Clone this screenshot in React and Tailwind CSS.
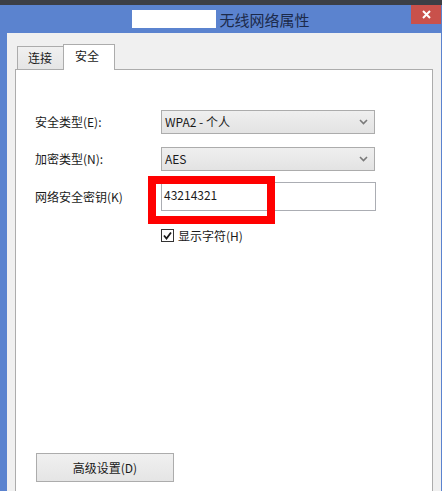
import React from 'react';

const font = "font-['Noto_Sans_CJK_SC',sans-serif]";

const Chevron = () => (
  <svg width="9" height="6" viewBox="0 0 9 6" className="shrink-0">
    <polyline points="1,1 4.5,4.5 8,1" fill="none" stroke="#7a7a7a" strokeWidth="1.6" />
  </svg>
);

const Select = ({ value }) => (
  <div className="w-[214px] h-[24px] border border-[#acacac] bg-gradient-to-b from-[#efefef] to-[#e3e3e3] flex items-center justify-between pl-[3px] pr-[6px]">
    <span className="text-[12px] leading-none text-[#1a1a1a]">{value}</span>
    <Chevron />
  </div>
);

const Row = ({ label, children, className = '' }) => (
  <div className={`flex items-center ${className}`}>
    <span className="w-[126px] text-[12px] leading-none text-[#1a1a1a]">{label}</span>
    {children}
  </div>
);

const App = () => {
  return (
    <div className={`w-[442px] h-[491px] overflow-hidden bg-[#3c3f46] ${font}`}>
      {/* strip of the desktop behind the window */}
      <div className="h-[5px]" />

      {/* window frame */}
      <div className="h-[486px] bg-[#5b83cf] pl-[7px] pr-px flex flex-col">
        {/* title bar */}
        <div className="relative h-[28px] shrink-0 flex items-center justify-center gap-[3px] -ml-[7px] -mr-px">
          <div className="w-[84px] h-[18px] bg-white" />
          <span className="text-[15px] leading-none text-[#1c2a4a]">无线网络属性</span>
          <div className="absolute top-0 right-px w-[30px] h-[19px] bg-[#c9514b] flex items-center justify-center">
            <svg width="9" height="9" viewBox="0 0 9 9">
              <path d="M1 1 L8 8 M8 1 L1 8" stroke="#fff" strokeWidth="2" />
            </svg>
          </div>
        </div>

        {/* client area */}
        <div className="flex-1 bg-[#f0f0f0] px-[8px] pt-[11px] flex flex-col">
          {/* tabs */}
          <div className="flex items-end pl-[2px]">
            <div className="w-[46px] h-[23px] border-l border-t border-[#acacac] bg-gradient-to-b from-[#f0f0f0] to-[#e5e5e5] flex items-center justify-center">
              <span className="text-[12px] leading-none text-[#1a1a1a] -ml-[1px]">连接</span>
            </div>
            <div className="relative z-10 w-[52px] h-[26px] -mb-px border-l border-t border-r border-[#acacac] bg-white flex items-start justify-center pt-[5px]">
              <span className="text-[12px] leading-none text-[#1a1a1a] -ml-[4px]">安全</span>
            </div>
          </div>

          {/* tab page */}
          <div className="relative flex-1 border border-b-0 border-[#acacac] bg-white pl-[19px] pt-[40px] flex flex-col">
            <Row label="安全类型(E):">
              <Select value="WPA2 - 个人" />
            </Row>
            <Row label="加密类型(N):" className="mt-[13px]">
              <Select value="AES" />
            </Row>
            <Row label="网络安全密钥(K)" className="mt-[11px]">
              <div className="w-[215px] h-[29px] border border-[#abadb3] bg-white flex items-center pl-[2px] pb-[3px]">
                <span className="text-[12px] leading-none text-[#1a1a1a]">43214321</span>
              </div>
            </Row>

            <div className="flex items-center mt-[18px] pl-[126px]">
              <div className="w-[13px] h-[13px] border border-[#333] bg-white flex items-center justify-center">
                <svg width="9" height="9" viewBox="0 0 9 9">
                  <path d="M1 4.5 L3.5 7.5 L8 1.5" fill="none" stroke="#1a1a1a" strokeWidth="1.8" />
                </svg>
              </div>
              <span className="ml-[4px] text-[12px] leading-none text-[#1a1a1a]">显示字符(H)</span>
            </div>

            <button className="mt-[211px] ml-px w-[138px] h-[29px] border border-[#acacac] bg-gradient-to-b from-[#f0f0f0] to-[#e5e5e5] flex items-center justify-center">
              <span className="text-[12px] leading-none text-[#1a1a1a]">高级设置(D)</span>
            </button>

            {/* red highlight drawn over the key field */}
            <div className="absolute left-[132px] top-[106px] w-[127px] h-[48px] border-[8px] border-[#f00]" />
          </div>
        </div>
      </div>
    </div>
  );
};

export default App;
